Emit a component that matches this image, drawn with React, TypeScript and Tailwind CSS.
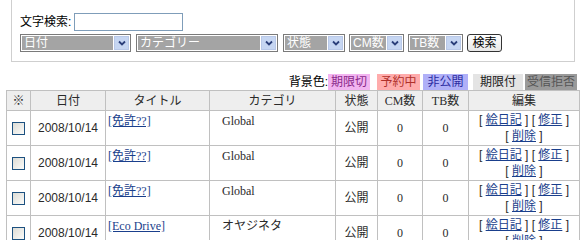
import React from "react";

const jp = { fontFamily: '"Liberation Sans", "Noto Sans CJK JP", sans-serif' };
const serif = { fontFamily: '"Liberation Serif", "Noto Sans CJK JP", serif' };

function Select({ label, w }: { label: string; w: number }) {
  return (
    <div
      className="flex h-[18px] items-stretch border border-[#7a7a7a] bg-white p-[1px]"
      style={{ width: w }}
    >
      <div className="flex-1 bg-[#a4a4a4] pl-[2px] text-[12px] leading-[14px] text-white">{label}</div>
      <div className="ml-[1px] flex w-[15px] items-center justify-center border border-[#b8c8e8] bg-[#c6d6f2]">
        <svg width="8" height="6" viewBox="0 0 8 6">
          <path d="M1 1.5 L4 4.5 L7 1.5" stroke="#2b3f7a" strokeWidth="1.8" fill="none" />
        </svg>
      </div>
    </div>
  );
}

type Row = { title: string; cat: string; catSerif: boolean };
const rows: Row[] = [
  { title: "[免許??]", cat: "Global", catSerif: true },
  { title: "[免許??]", cat: "Global", catSerif: true },
  { title: "[免許??]", cat: "Global", catSerif: true },
  { title: "[Eco Drive]", cat: "オヤジネタ", catSerif: false },
];

export default function App() {
  const td = "border border-[#c0c0c0] p-[1px]";
  return (
    <div className="w-[583px] h-[240px] overflow-hidden bg-white text-[12px] text-[#2a2a2a]" style={jp}>
      <div className="ml-[11px] h-[62px] w-[564px] border-x border-b border-[#cfcfcf] pl-[8px] pt-[13px]">
        <div className="flex h-[18px] items-center">
          <span className="text-[12px] leading-[18px] text-black">文字検索:</span>
          <div className="ml-[3px] h-[18px] w-[109px] border border-[#7f9db9] bg-white" />
        </div>
        <div className="mt-[3px] flex items-center">
          <Select label="日付" w={111} />
          <div className="w-[5px]" />
          <Select label="カテゴリー" w={142} />
          <div className="w-[5px]" />
          <Select label="状態" w={62} />
          <div className="w-[4px]" />
          <Select label="CM数" w={55} />
          <div className="w-[4px]" />
          <Select label="TB数" w={55} />
          <div className="w-[4px]" />
          <div className="flex h-[18px] w-[35px] items-center justify-center rounded-[3px] border border-[#333] bg-gradient-to-b from-white to-[#e8e8e8] text-[12px] leading-[14px] text-black">
            検索
          </div>
        </div>
      </div>

      <div className="mt-[12px] flex h-[16px] items-center justify-end pr-[6px] text-[12px] leading-[16px]">
        <span className="text-black">背景色:</span>
        <span className="w-[42px] bg-[#f2b4f0] text-center text-[#8a2a8a]">期限切</span>
        <span className="ml-[7px] w-[43px] bg-[#ffacac] text-center text-[#b0302a]">予約中</span>
        <span className="ml-[3px] w-[45px] bg-[#b0b0f8] text-center text-[#2a2aa0]">非公開</span>
        <span className="ml-[5px] w-[50px] bg-[#e4e4e4] text-center text-[#222]">期限付</span>
        <span className="ml-[2px] w-[52px] bg-[#9a9a9a] text-center text-[#555]">受信拒否</span>
      </div>

      <table className="ml-[6px] w-[574px] border-collapse text-[12px] leading-[16px]" style={{ tableLayout: "fixed" }}>
        <colgroup>
          <col style={{ width: 24 }} />
          <col style={{ width: 75 }} />
          <col style={{ width: 104 }} />
          <col style={{ width: 126 }} />
          <col style={{ width: 42 }} />
          <col style={{ width: 45 }} />
          <col style={{ width: 46 }} />
          <col />
        </colgroup>
        <thead>
          <tr className="h-[20px] bg-[#eeeeee] text-center font-normal">
            <th className={`${td} font-normal`}>※</th>
            <th className={`${td} font-normal`}>日付</th>
            <th className={`${td} font-normal`}>タイトル</th>
            <th className={`${td} font-normal`}>カテゴリ</th>
            <th className={`${td} font-normal`}>状態</th>
            <th className={`${td} font-normal`} style={serif}>CM数</th>
            <th className={`${td} font-normal`} style={serif}>TB数</th>
            <th className={`${td} font-normal`}>編集</th>
          </tr>
        </thead>
        <tbody>
          {rows.map((r, i) => (
            <tr key={i} className="h-[35px]">
              <td className={`${td} text-center align-middle`}>
                <div className="mx-auto h-[13px] w-[13px] border border-[#1c5180] bg-gradient-to-br from-[#dcdcd6] to-[#fbfbf9]" />
              </td>
              <td className={`${td} text-center align-middle`}>2008/10/14</td>
              <td className={`${td} align-top pl-[2px] pt-[2px]`}>
                <a className="text-[#1a3f8c] underline" style={serif}>{r.title}</a>
              </td>
              <td className={`${td} align-top pl-[12px] pt-[2px]`} style={r.catSerif ? serif : jp}>
                {r.cat}
              </td>
              <td className={`${td} text-center align-middle`}>公開</td>
              <td className={`${td} text-center align-middle`} style={serif}>0</td>
              <td className={`${td} text-center align-middle`} style={serif}>0</td>
              <td className={`${td} text-center align-middle leading-[16px]`}>
                <div>
                  [ <a className="text-[#1a3f8c] underline">絵日記</a> ] [ <a className="text-[#1a3f8c] underline">修正</a> ]
                </div>
                <div>
                  [ <a className="text-[#1a3f8c] underline">削除</a> ]
                </div>
              </td>
            </tr>
          ))}
        </tbody>
      </table>
    </div>
  );
}
